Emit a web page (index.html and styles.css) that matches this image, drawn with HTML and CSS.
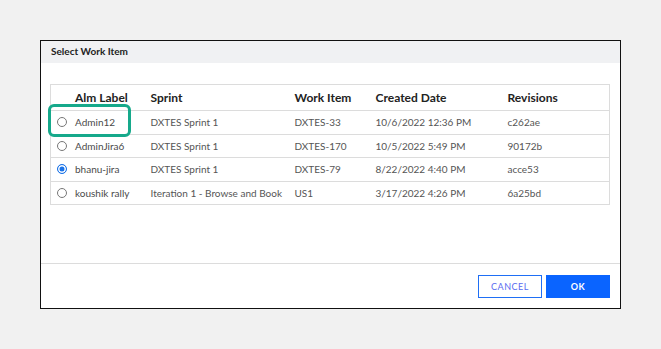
FILE: index.html
```html
<!DOCTYPE html>
<html lang="en">
<head>
  <meta charset="UTF-8" />
  <title>Select Work Item</title>
  <link rel="stylesheet" href="styles.css">
</head>
<body>

<div class="dialog">
  <div class="dialog-header">Select Work Item</div>

  <div class="dialog-body">
    <table class="items">
      <colgroup>
        <col class="c-label">
        <col class="c-sprint">
        <col class="c-item">
        <col class="c-date">
        <col>
      </colgroup>
      <thead>
        <tr>
          <th class="label-cell">Alm Label</th>
          <th>Sprint</th>
          <th>Work Item</th>
          <th>Created Date</th>
          <th>Revisions</th>
        </tr>
      </thead>
      <tbody>
        <tr>
          <td class="label-cell"><input type="radio" name="item" class="radio"> Admin12</td>
          <td>DXTES Sprint 1</td>
          <td>DXTES-33</td>
          <td>10/6/2022 12:36 PM</td>
          <td>c262ae</td>
        </tr>
        <tr>
          <td class="label-cell"><input type="radio" name="item" class="radio"> AdminJira6</td>
          <td>DXTES Sprint 1</td>
          <td>DXTES-170</td>
          <td>10/5/2022 5:49 PM</td>
          <td>90172b</td>
        </tr>
        <tr>
          <td class="label-cell"><input type="radio" name="item" class="radio" checked> bhanu-jira</td>
          <td>DXTES Sprint 1</td>
          <td>DXTES-79</td>
          <td>8/22/2022 4:40 PM</td>
          <td>acce53</td>
        </tr>
        <tr>
          <td class="label-cell"><input type="radio" name="item" class="radio"> koushik rally</td>
          <td>Iteration 1 - Browse and Book</td>
          <td>US1</td>
          <td>3/17/2022 4:26 PM</td>
          <td>6a25bd</td>
        </tr>
      </tbody>
    </table>

    <!-- highlight annotation -->
    <div class="highlight"></div>
  </div>

  <div class="dialog-footer">
    <button class="btn btn-outline">CANCEL</button>
    <button class="btn btn-primary">OK</button>
  </div>
</div>

</body>
</html>
```

FILE: styles.css
```css
* {
  margin: 0;
  padding: 0;
  box-sizing: border-box;
}

body {
  background-color: #f1f1f1;
  font-family: 'Lato', 'Liberation Sans', sans-serif;
  padding: 40px 0 0 40px;
}

.dialog {
  width: 581px;
  height: 269px;
  background-color: #fff;
  border: 1px solid #111;
  display: flex;
  flex-direction: column;
}

.dialog-header {
  height: 22px;
  background-color: #f0f1f3;
  padding-left: 10px;
  font-size: 10px;
  font-weight: bold;
  color: #222;
  line-height: 21px;
}

.dialog-body {
  position: relative;
  flex: 1;
  padding: 21px 11px 0 9px;
  border-bottom: 1px solid #dcdcdc;
}

.items {
  width: 560px;
  table-layout: fixed;
  border-collapse: collapse;
  border: 1px solid #dcdcdc;
}

.c-label { width: 100px; }
.c-sprint { width: 144px; }
.c-item { width: 81px; }
.c-date { width: 132px; }

.items th {
  height: 26px;
  text-align: left;
  font-size: 12px;
  font-weight: bold;
  color: #222;
}

.items td {
  height: 23.5px;
  border-top: 1px solid #dcdcdc;
  font-size: 10px;
  color: #555;
  white-space: nowrap;
}

.items .label-cell {
  padding-left: 24px;
  position: relative;
}

.items td.label-cell {
  color: #4a4a4a;
}

.radio {
  appearance: none;
  position: absolute;
  left: 6px;
  top: 6px;
  width: 10px;
  height: 10px;
  border: 1px solid #777;
  border-radius: 50%;
  background-color: #fff;
}

.radio:checked {
  border-color: #1a73e8;
  background-color: #1a73e8;
  box-shadow: inset 0 0 0 1.5px #fff;
}

.highlight {
  position: absolute;
  left: 7px;
  top: 41px;
  width: 83px;
  height: 33px;
  border: 3px solid #16a98b;
  border-radius: 6px;
}

.dialog-footer {
  height: 44px;
  display: flex;
  justify-content: flex-end;
  align-items: center;
  gap: 4px;
  padding-right: 10px;
}

.btn {
  width: 64px;
  height: 23px;
  font-family: 'Lato', 'Liberation Sans', sans-serif;
  font-size: 9px;
  letter-spacing: 0.5px;
  cursor: pointer;
}

.btn-outline {
  background-color: #fff;
  border: 1px solid #1f6ff5;
  color: #5a6cf0;
}

.btn-primary {
  background-color: #0a64ff;
  border: 1px solid #0a64ff;
  color: #fff;
  font-weight: bold;
}
```
